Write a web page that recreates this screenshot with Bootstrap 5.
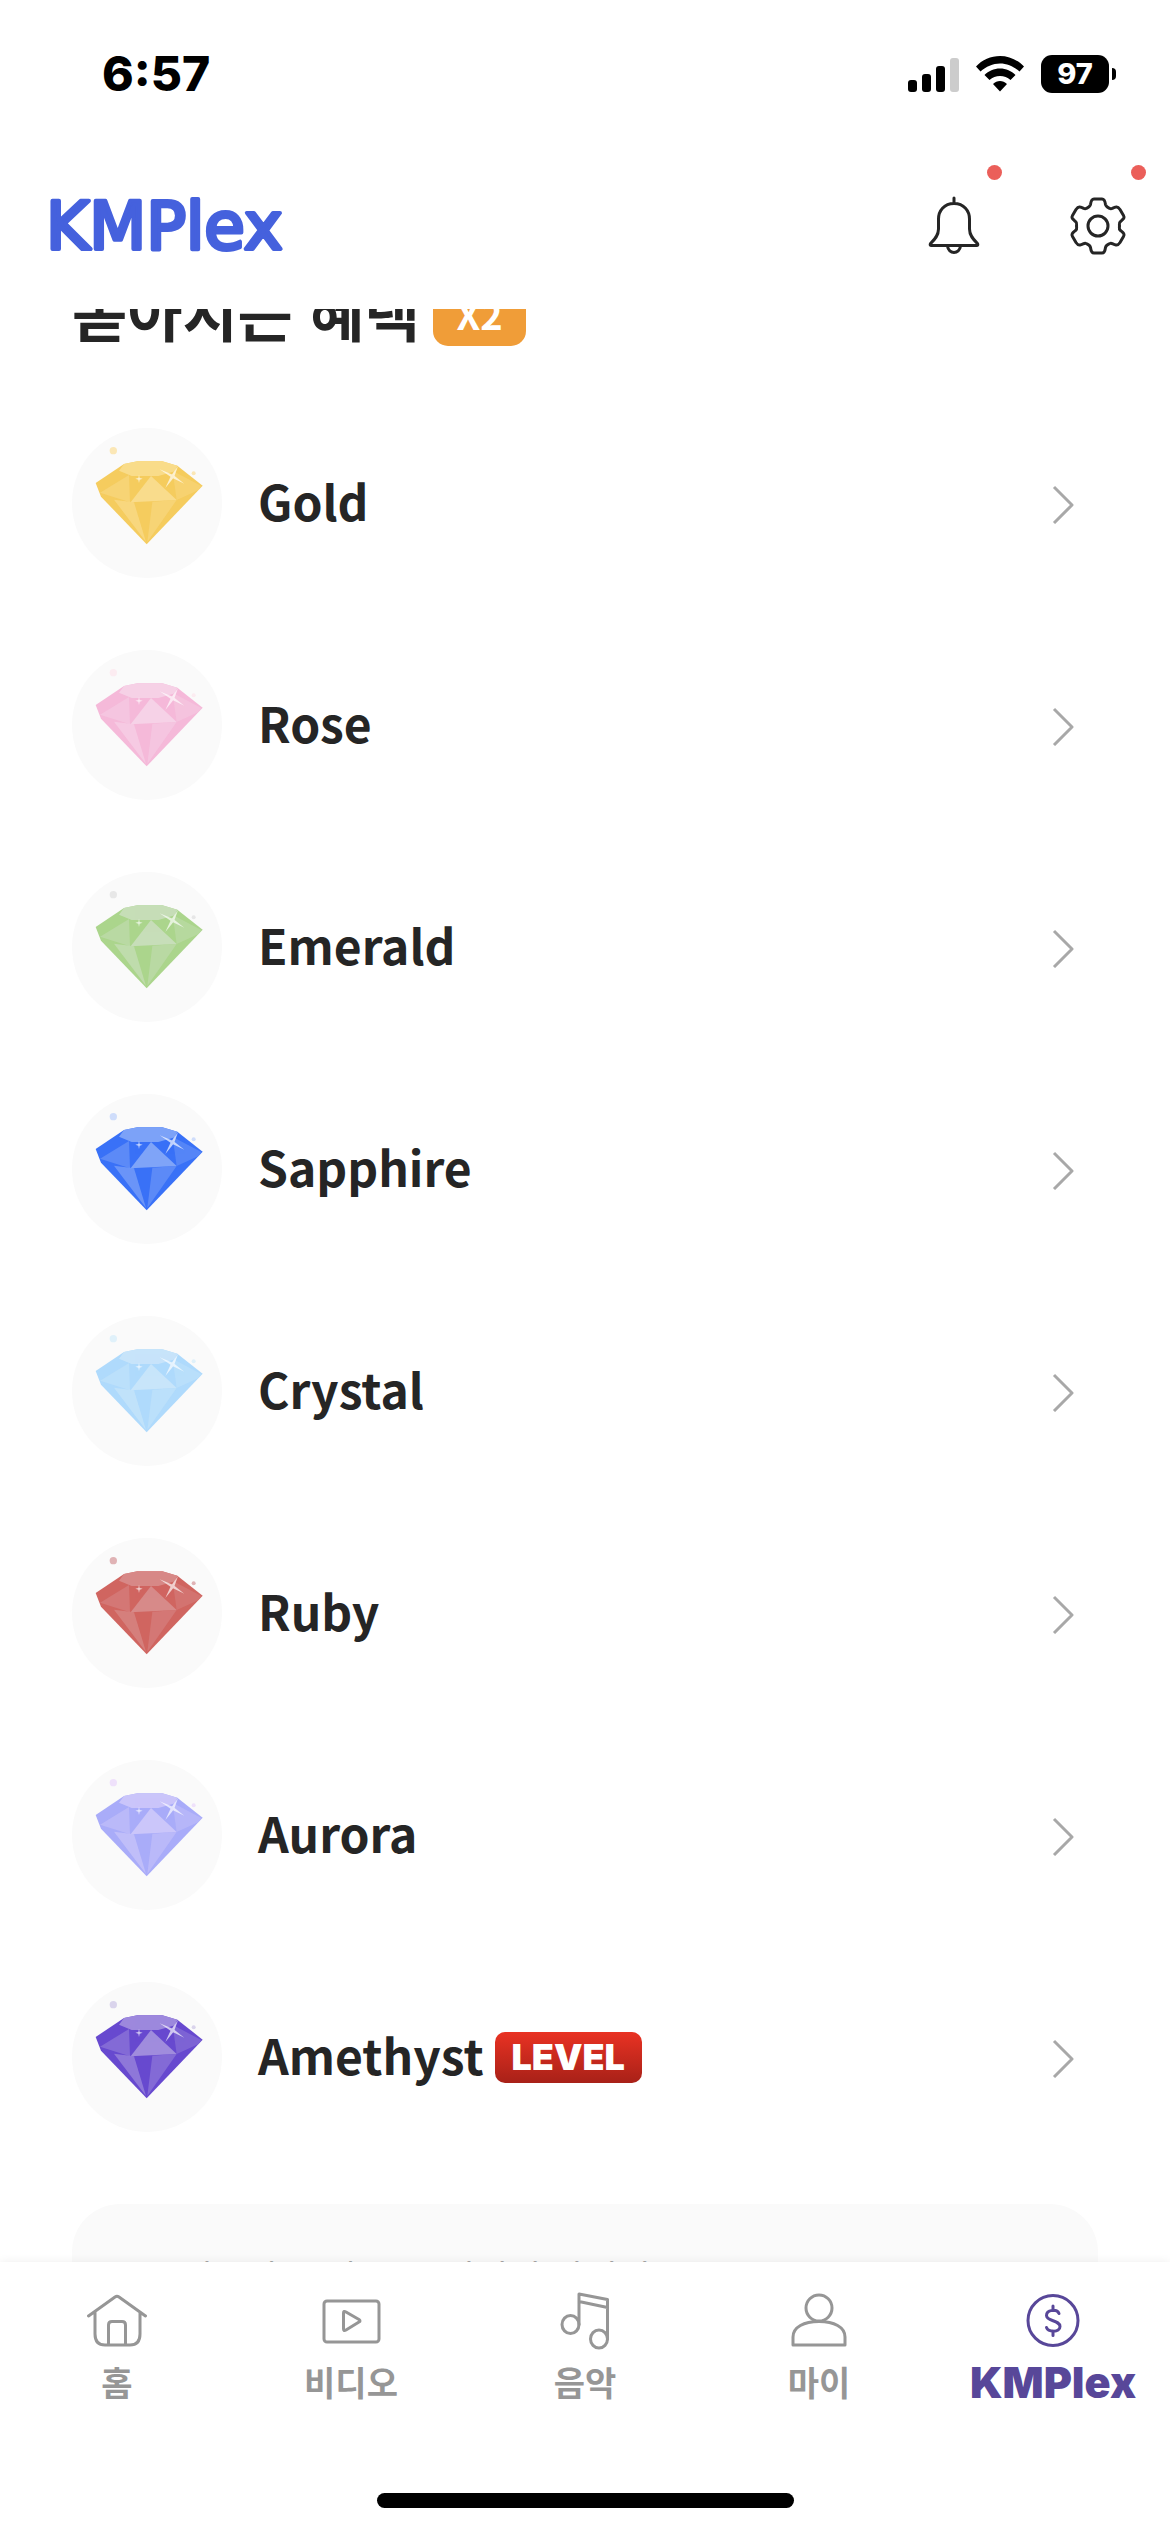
<!DOCTYPE html>
<html lang="ko">
<head>
<meta charset="utf-8">
<meta name="viewport" content="width=device-width, initial-scale=1">
<title>KMPlex</title>
<link rel="stylesheet" href="https://cdn.jsdelivr.net/npm/bootstrap@5.3.0/dist/css/bootstrap.min.css">
<style>
  body { font-family: "Noto Sans CJK KR", "Noto Sans", sans-serif; color: #252525; }
  svg { display: block; flex: none; }

  .status { height: 141px; padding: 7px 54px 0 102px; font-family: Inter, sans-serif; color: #000; }
  .clock { font-size: 48px; line-height: 60px; font-weight: 800; }
  .signals { gap: 17px; }
  .charge { width: 68px; height: 38px; border-radius: 11px; font-size: 29px; line-height: 38px; font-weight: 800; }
  .nub { width: 4px; height: 12px; border-radius: 0 6px 6px 0; background: #000; margin-left: 3px; }

  .topbar { height: 168px; }
  .wordmark { margin-left: 44px; }
  .wordmark text { font-family: "DejaVu Sans", sans-serif; font-size: 66px; fill: #4561dd; stroke: #4561dd; stroke-width: 4px; stroke-linejoin: round; }
  .tool { width: 144px; height: 168px; color: #252525; }
  .dot { left: 105px; top: 24px; width: 15px; height: 15px; background: #eb5f5a; }

  .sheet { padding: 0 72px; margin-top: -38px; }
  .heading { font-size: 60px; line-height: 80px; font-weight: 700; margin: 0; gap: 13px; }
  .times { width: 93px; height: 60px; border-radius: 15px; margin-top: 10px; background: #f09d38; color: #fff; font-size: 38px; line-height: 56px; }
  .gems { margin-top: 41px; }
  .gem { padding: 36px 23px 36px 0; font-size: 48px; line-height: 72px; font-weight: 700; color: #252525; background: none; }
  .gem:hover { color: #252525; }
  .gem-name { padding-bottom: 6px; }
  .stone { background: #fafafa; margin-right: 36px; }
  .level { width: 147px; height: 51px; border-radius: 10px; margin-left: 11px; background: linear-gradient(#e93223, #a82118); color: #fff; font: 900 36px/51px Inter, sans-serif; }
  .notice { margin-top: 36px; padding: 45px 108px; border-radius: 48px; background: #fafafa; color: #666; font-size: 36px; line-height: 54px; }

  .tabs { height: 270px; padding-top: 29px; background: #fff; box-shadow: 0 0 9px rgba(0,0,0,.07); }
  .tab { color: #969696; font-size: 34px; line-height: 62px; font-weight: 700; }
  .tab.active { color: #584799; font-family: Inter, sans-serif; font-size: 43px; font-weight: 900; }
  .homebar { width: 417px; height: 15px; background: #000; margin-bottom: 24px; }
  .line { fill: none; stroke: currentColor; stroke-width: 3; stroke-linecap: round; stroke-linejoin: round; }
</style>
<script src="https://cdn.jsdelivr.net/npm/bootstrap@5.3.0/dist/js/bootstrap.bundle.min.js"></script>
</head>
<body class="vh-100 d-flex flex-column overflow-hidden bg-white">

<svg width="0" height="0" class="position-absolute" aria-hidden="true">
  <symbol id="diamond" viewBox="0 0 450 450">
    <circle cx="124" cy="68" r="11" fill="var(--spark)"/><circle cx="365" cy="136" r="6" fill="var(--spark)"/>
    <path fill="currentColor" d="M71 165 156 108 196 100H271L316 113 392 173 224 349 87 206Z"/>
    <g fill="var(--face)">
      <path opacity=".95" d="M156 108 196 100H271L316 113 309 130 259 144H179L141 128Z"/>
      <path opacity=".5" d="M171 141 84 194 174 223Z"/>
      <path d="M237 144 176 223 314 216Z"/>
      <path opacity=".4" d="M304 130V144L314 216 378 187 388 174Z"/>
      <path opacity=".7" d="M126 215 186 223 222 342Z"/>
      <path opacity=".5" d="M241 221 314 216 226 342Z"/>
    </g>
    <g fill="#fff" opacity=".68">
      <path d="M263 124 304 141 337 167 300 149Z"/>
      <path d="M318 115 306 148 280 180 297 143Z"/>
      <path d="M201 140 203 150 212 152 203 155 201 165 199 155 190 152 199 150Z"/>
    </g>
  </symbol>
  <symbol id="next" viewBox="0 0 24 42"><path d="M3 5 21 23 3 41" fill="none" stroke="#a8a8a8" stroke-width="3" stroke-linejoin="round"/></symbol>
</svg>

<div class="status d-flex align-items-center justify-content-between flex-shrink-0">
  <div class="clock">6:57</div>
  <div class="signals d-flex align-items-center">
    <svg width="51" height="36" viewBox="0 0 51 36"><rect y="24" width="9" height="12" rx="3"/><rect x="14" y="18" width="9" height="18" rx="3"/><rect x="28" y="10" width="9" height="26" rx="3"/><rect x="42" y="2" width="9" height="34" rx="3" fill="#ccc"/></svg>
    <svg width="48" height="36" viewBox="0 0 48 36"><path d="M24 0C33 0 42 4 48 10.500L43.500 15.500C38 10.500 31 7.500 24 7.500S10 10.500 4.500 15.500L0 10.500C6 4 15 0 24 0ZM24 12.500C30 12.500 35.500 15 39.500 19L34.500 24C31.500 21.500 28 20 24 20S16.500 21.500 13.500 24L8.500 19C12.500 15 18 12.500 24 12.500ZM24 25C26.500 25 29 26 31 28L24 35.500 17 28C19 26 21.500 25 24 25Z"/></svg>
    <div class="d-flex align-items-center"><div class="charge bg-black text-white text-center">97</div><div class="nub"></div></div>
  </div>
</div>

<header class="topbar d-flex align-items-center justify-content-between flex-shrink-0">
  <a href="#" class="wordmark" aria-label="KMPlex"><svg width="260" height="88" viewBox="0 0 260 88"><text x="2" y="68">KMPlex</text></svg></a>
  <div class="d-flex">
    <button type="button" class="tool btn border-0 p-0 position-relative d-flex align-items-center justify-content-center" aria-label="알림">
      <svg width="60" height="60" viewBox="0 0 60 60" class="line"><path d="M30 3V8M30 8.500C20 8.500 14.500 16 14.500 24V34C14.500 41 10 45 6.500 48.500Q5.500 50.500 7.500 50.500H52.500Q54.500 50.500 53.500 48.500C50 45 45.500 41 45.500 34V24C45.500 16 40 8.500 30 8.500ZM23.500 51C24.500 59.500 35.500 59.500 36.500 51"/></svg>
      <span class="dot position-absolute rounded-circle"></span>
    </button>
    <button type="button" class="tool btn border-0 p-0 position-relative d-flex align-items-center justify-content-center" aria-label="설정">
      <svg width="60" height="60" viewBox="0 0 60 60" class="line"><circle cx="30" cy="31" r="10"/><path d="M22.500 9.500C23 5.500 24 4 26 4H34C36 4 37 5.500 37.500 9.500C38 12 40 12.500 42 13.500C43.500 14.500 45 12.500 48 12C50 11.500 51 13 52 14.500L55.500 20.500C57 23 55.500 24 52.500 26.500C50.500 28 51.500 29.500 51.500 31S50.500 34 52.500 35.500C55.500 38 57 39 55.500 41.500L52 47.500C51 49 50 50.500 48 50C45 49.500 43.500 47.500 42 48.500C40 49.500 38 50 37.500 52.500C37 56.500 36 58 34 58H26C24 58 23 56.500 22.500 52.500C22 50 20 49.500 18 48.500C16.500 47.500 15 49.500 12 50C10 50.500 9 49 8 47.500L4.500 41.500C3 39 4.500 38 7.500 35.500C9.500 34 8.500 32.500 8.500 31S9.500 28 7.500 26.500C4.500 24 3 23 4.500 20.500L8 14.500C9 13 10 11.500 12 12C15 12.500 16.500 14.500 18 13.500C20 12.500 22 12 22.500 9.500Z"/></svg>
      <span class="dot position-absolute rounded-circle"></span>
    </button>
  </div>
</header>

<main class="flex-grow-1 overflow-hidden">
  <div class="sheet d-flow-root">
    <h1 class="heading d-flex align-items-center">쏟아지는 혜택 <span class="times text-center">X2</span></h1>
    <div class="gems list-group list-group-flush">
      <a href="#" class="gem list-group-item border-0 d-flex align-items-center"><svg class="stone rounded-circle" width="150" height="150" style="color:#f5cc5e;--face:#f9dc8c;--spark:#fbe7b6"><use href="#diamond"/></svg><span class="gem-name">Gold</span><svg class="ms-auto" width="24" height="42"><use href="#next"/></svg></a>
      <a href="#" class="gem list-group-item border-0 d-flex align-items-center"><svg class="stone rounded-circle" width="150" height="150" style="color:#f5b9d9;--face:#f6d2e7;--spark:#fcecf1"><use href="#diamond"/></svg><span class="gem-name">Rose</span><svg class="ms-auto" width="24" height="42"><use href="#next"/></svg></a>
      <a href="#" class="gem list-group-item border-0 d-flex align-items-center"><svg class="stone rounded-circle" width="150" height="150" style="color:#abd58c;--face:#c7deb9;--spark:#e7e7e7"><use href="#diamond"/></svg><span class="gem-name">Emerald</span><svg class="ms-auto" width="24" height="42"><use href="#next"/></svg></a>
      <a href="#" class="gem list-group-item border-0 d-flex align-items-center"><svg class="stone rounded-circle" width="150" height="150" style="color:#3971f7;--face:#7fa4f8;--spark:#cfddfb"><use href="#diamond"/></svg><span class="gem-name">Sapphire</span><svg class="ms-auto" width="24" height="42"><use href="#next"/></svg></a>
      <a href="#" class="gem list-group-item border-0 d-flex align-items-center"><svg class="stone rounded-circle" width="150" height="150" style="color:#afdafc;--face:#c8e5fa;--spark:#e0f1fa"><use href="#diamond"/></svg><span class="gem-name">Crystal</span><svg class="ms-auto" width="24" height="42"><use href="#next"/></svg></a>
      <a href="#" class="gem list-group-item border-0 d-flex align-items-center"><svg class="stone rounded-circle" width="150" height="150" style="color:#d06560;--face:#d78a89;--spark:#e0b3b5"><use href="#diamond"/></svg><span class="gem-name">Ruby</span><svg class="ms-auto" width="24" height="42"><use href="#next"/></svg></a>
      <a href="#" class="gem list-group-item border-0 d-flex align-items-center"><svg class="stone rounded-circle" width="150" height="150" style="color:#a9acf9;--face:#cbc6fa;--spark:#efe1fb"><use href="#diamond"/></svg><span class="gem-name">Aurora</span><svg class="ms-auto" width="24" height="42"><use href="#next"/></svg></a>
      <a href="#" class="gem list-group-item border-0 d-flex align-items-center"><svg class="stone rounded-circle" width="150" height="150" style="color:#6749cf;--face:#a08cdd;--spark:#dad4ec"><use href="#diamond"/></svg><span class="gem-name">Amethyst</span><span class="level text-center">LEVEL</span><svg class="ms-auto" width="24" height="42"><use href="#next"/></svg></a>
    </div>
    <div class="notice">이용자는 예시 시 이미지 아이디</div>
  </div>
</main>

<nav class="tabs d-flex flex-column justify-content-between align-items-center flex-shrink-0 position-relative">
  <div class="d-flex w-100">
    <a href="#" class="tab col d-flex flex-column align-items-center text-decoration-none"><svg width="60" height="60" viewBox="0 0 60 60" class="line"><path d="M1.500 25 28 6Q30 4.500 32 6L58.500 25M8 21V43Q8 54 18 54H43Q53 54 53 43V21M21.500 54V34Q21.500 30.500 25 30.500H35Q38.500 30.500 38.500 34V54"/></svg>홈</a>
    <a href="#" class="tab col d-flex flex-column align-items-center text-decoration-none"><svg width="60" height="60" viewBox="0 0 60 60" class="line"><rect x="3" y="10" width="55" height="41" rx="3"/><path d="M22.500 22Q22.500 19.500 25 21L38 28.500Q40 30 38 31L25 39Q22.500 40.500 22.500 38Z"/></svg>비디오</a>
    <a href="#" class="tab col d-flex flex-column align-items-center text-decoration-none"><svg width="60" height="60" viewBox="0 0 60 60" class="line"><ellipse cx="15.500" cy="33.500" rx="8.500" ry="9"/><ellipse cx="44" cy="48" rx="8.500" ry="9"/><path d="M24 33.500V3L52.500 8.500V48M24 10.500 52.500 16.500"/></svg>음악</a>
    <a href="#" class="tab col d-flex flex-column align-items-center text-decoration-none"><svg width="60" height="60" viewBox="0 0 60 60" class="line"><circle cx="30" cy="17" r="13"/><path d="M4 54V46C4 36 15 30.500 30 30.500S56 36 56 46V54Z"/></svg>마이</a>
    <a href="#" class="tab active col d-flex flex-column align-items-center text-decoration-none" aria-current="page"><svg width="60" height="60" viewBox="0 0 60 60" class="line"><circle cx="30" cy="29.500" r="25"/><path d="M36 22.500C34 17.500 23.500 18.500 23.500 24.500S37 29 37 35.500S25 41 23.500 36.500M30 15V19.500M30 40V44.500"/></svg>KMPlex</a>
  </div>
  <div class="homebar rounded-pill"></div>
</nav>
</body>
</html>
